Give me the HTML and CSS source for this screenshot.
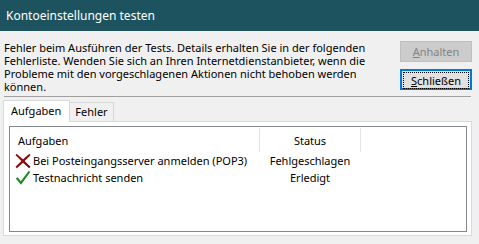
FILE: index.html
```html
<!DOCTYPE html>
<html lang="de">
<head>
  <meta charset="UTF-8" />
  <title>Kontoeinstellungen testen</title>
  <link rel="stylesheet" href="styles.css">
</head>
<body>
  <div class="titlebar">Kontoeinstellungen testen</div>

  <div class="top">
    <p class="message">
      <span>Fehler beim Ausführen der Tests. Details erhalten Sie in der folgenden</span>
      <span>Fehlerliste. Wenden Sie sich an Ihren Internetdienstanbieter, wenn die</span>
      <span>Probleme mit den vorgeschlagenen Aktionen nicht behoben werden</span>
      <span>können.</span>
    </p>
    <div class="buttons">
      <button class="btn" disabled><u>A</u>nhalten</button>
      <button class="btn btn-default"><span class="focus"><u>S</u>chließen</span></button>
    </div>
  </div>

  <div class="separator"></div>

  <div class="tabs">
    <div class="tab active">Aufgaben</div>
    <div class="tab">Fehler</div>
  </div>

  <div class="panel">
    <div class="listview">
      <div class="row header">
        <div class="col-task">Aufgaben</div>
        <div class="col-status">Status</div>
        <div class="col-rest"></div>
      </div>
      <div class="row item">
        <div class="col-task">
          <svg class="icon" width="16" height="16" viewBox="0 0 16 16">
            <defs>
              <linearGradient id="xg" x1="0" y1="0" x2="1" y2="1">
                <stop offset="0" stop-color="#a51515"/>
                <stop offset="1" stop-color="#650808"/>
              </linearGradient>
            </defs>
            <path d="M1.6 0.8 L8 6.3 L14.4 0.8 L15.5 2.2 L9.6 8 L15.5 13.8 L14.2 15.2 L8 9.7 L1.8 15.2 L0.5 13.8 L6.4 8 L0.5 2.2 Z" fill="url(#xg)"/>
          </svg>
          Bei Posteingangsserver anmelden (POP3)
        </div>
        <div class="col-status">Fehlgeschlagen</div>
        <div class="col-rest"></div>
      </div>
      <div class="row item">
        <div class="col-task">
          <svg class="icon" width="16" height="16" viewBox="0 0 16 16">
            <path d="M0.8 8.6 L2.8 7.2 L5.8 11.2 L13.8 0.8 L15.2 2 L6 14.8 Z" fill="#1a8a1f"/>
          </svg>
          Testnachricht senden
        </div>
        <div class="col-status">Erledigt</div>
        <div class="col-rest"></div>
      </div>
    </div>
  </div>
</body>
</html>
```

FILE: styles.css
```css
body {
  margin: 0;
  background: #f0f0f0;
  font-family: "Noto Sans", "Open Sans", sans-serif;
  font-size: 11px;
  color: #000;
  width: 479px;
  height: 244px;
  overflow: hidden;
}

.titlebar {
  height: 31px;
  line-height: 31px;
  background: #1d535e;
  color: #fff;
  font-size: 12px;
  padding-left: 6px;
}

.top {
  display: flex;
  justify-content: space-between;
  padding: 0 7px 0 4px;
  height: 64px;
}

.message {
  margin: 10px 0 0;
  line-height: 13px;
}

.message span {
  display: block;
  height: 13px;
  white-space: nowrap;
}

.buttons {
  display: flex;
  flex-direction: column;
  gap: 7px;
  padding-top: 10px;
}

.btn {
  width: 72px;
  height: 21px;
  font-family: inherit;
  font-size: 11px;
  padding: 0;
  background: #e1e1e1;
  border: 1px solid #adadad;
  color: #000;
}

.btn[disabled] {
  background: #cccccc;
  border-color: #bfbfbf;
  color: #838383;
}

.btn-default {
  border: 2px solid #0078d7;
  padding: 1px;
}

.btn-default .focus {
  display: block;
  height: 15px;
  line-height: 15px;
  border: 1px dotted #000;
}

.separator {
  height: 1px;
  background: #a0a0a0;
  margin: 1px 8px 0 4px;
}

.tabs {
  display: flex;
  align-items: flex-end;
  margin: 3px 0 0 3px;
  height: 21px;
}

.tab {
  border: 1px solid #d9d9d9;
  border-bottom: none;
  background: #f0f0f0;
  height: 18px;
  line-height: 18px;
  padding: 0 5px;
  font-size: 11px;
}

.tab.active {
  background: #fff;
  height: 21px;
  line-height: 20px;
  padding: 0 8px 0 7px;
  margin-bottom: -1px;
  position: relative;
  z-index: 1;
}

.tab + .tab {
  border-left: none;
}

.panel {
  margin: 0 7px 0 3px;
  height: 115px;
  background: #fff;
  border: 1px solid #d9d9d9;
  padding: 4px 4px 4px 5px;
  box-sizing: border-box;
}

.listview {
  height: 106px;
  border: 1px solid #828790;
  background: #fff;
  box-sizing: border-box;
}

.row {
  display: flex;
}

.header {
  height: 25px;
  align-items: stretch;
}

.header > div {
  display: flex;
  align-items: center;
  border-right: 1px solid #e5e5e5;
  margin: 1px 0 0;
}

.header .col-rest {
  border-right: none;
}

.col-task {
  width: 250px;
  padding-left: 8px;
  box-sizing: border-box;
  display: flex;
  align-items: center;
  white-space: nowrap;
}

.col-status {
  width: 100px;
  justify-content: center;
  text-align: center;
}

.col-rest {
  flex: 1;
}

.item {
  height: 17px;
  align-items: center;
}

.item .col-task {
  padding-left: 5px;
}

.icon {
  margin-right: 2px;
  flex-shrink: 0;
}
```
